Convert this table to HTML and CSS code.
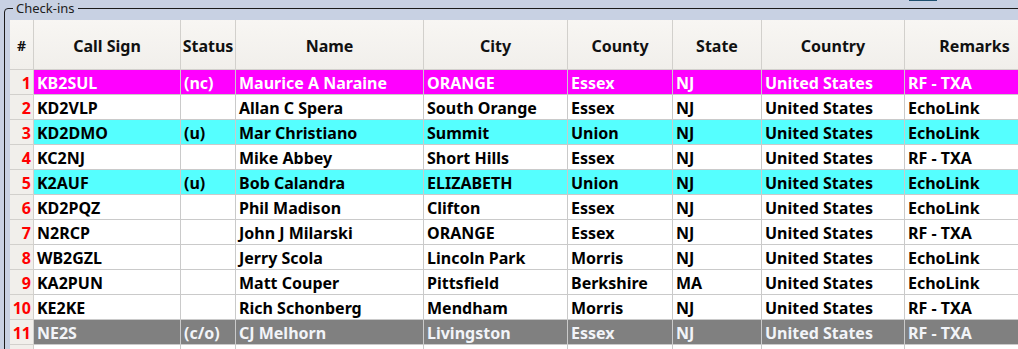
FILE: index.html
```html
<!DOCTYPE html>
<html>
<head>
<meta charset="utf-8">
<link rel="stylesheet" href="styles.css">
</head>
<body>
<div class="tab-button"></div>
<fieldset class="group">
  <legend class="group-label">Check-ins</legend>
  <div class="grid">
    <div class="hd num">#</div>
    <div class="hd">Call Sign</div>
    <div class="hd">Status</div>
    <div class="hd">Name</div>
    <div class="hd">City</div>
    <div class="hd">County</div>
    <div class="hd">State</div>
    <div class="hd">Country</div>
    <div class="hd">Remarks</div>

    <div class="rn">1</div>
    <div class="c nc">KB2SUL</div><div class="c nc">(nc)</div><div class="c nc">Maurice A Naraine</div><div class="c nc">ORANGE</div><div class="c nc">Essex</div><div class="c nc">NJ</div><div class="c nc">United States</div><div class="c nc">RF - TXA</div>

    <div class="rn">2</div>
    <div class="c">KD2VLP</div><div class="c"></div><div class="c">Allan C Spera</div><div class="c">South Orange</div><div class="c">Essex</div><div class="c">NJ</div><div class="c">United States</div><div class="c">EchoLink</div>

    <div class="rn">3</div>
    <div class="c u">KD2DMO</div><div class="c u">(u)</div><div class="c u">Mar Christiano</div><div class="c u">Summit</div><div class="c u">Union</div><div class="c u">NJ</div><div class="c u">United States</div><div class="c u">EchoLink</div>

    <div class="rn">4</div>
    <div class="c">KC2NJ</div><div class="c"></div><div class="c">Mike Abbey</div><div class="c">Short Hills</div><div class="c">Essex</div><div class="c">NJ</div><div class="c">United States</div><div class="c">RF - TXA</div>

    <div class="rn">5</div>
    <div class="c u">K2AUF</div><div class="c u">(u)</div><div class="c u">Bob Calandra</div><div class="c u">ELIZABETH</div><div class="c u">Union</div><div class="c u">NJ</div><div class="c u">United States</div><div class="c u">EchoLink</div>

    <div class="rn">6</div>
    <div class="c">KD2PQZ</div><div class="c"></div><div class="c">Phil Madison</div><div class="c">Clifton</div><div class="c">Essex</div><div class="c">NJ</div><div class="c">United States</div><div class="c">EchoLink</div>

    <div class="rn">7</div>
    <div class="c">N2RCP</div><div class="c"></div><div class="c">John J Milarski</div><div class="c">ORANGE</div><div class="c">Essex</div><div class="c">NJ</div><div class="c">United States</div><div class="c">RF - TXA</div>

    <div class="rn">8</div>
    <div class="c">WB2GZL</div><div class="c"></div><div class="c">Jerry Scola</div><div class="c">Lincoln Park</div><div class="c">Morris</div><div class="c">NJ</div><div class="c">United States</div><div class="c">EchoLink</div>

    <div class="rn">9</div>
    <div class="c">KA2PUN</div><div class="c"></div><div class="c">Matt Couper</div><div class="c">Pittsfield</div><div class="c">Berkshire</div><div class="c">MA</div><div class="c">United States</div><div class="c">EchoLink</div>

    <div class="rn">10</div>
    <div class="c">KE2KE</div><div class="c"></div><div class="c">Rich Schonberg</div><div class="c">Mendham</div><div class="c">Morris</div><div class="c">NJ</div><div class="c">United States</div><div class="c">RF - TXA</div>

    <div class="rn">11</div>
    <div class="c co">NE2S</div><div class="c co">(c/o)</div><div class="c co">CJ Melhorn</div><div class="c co">Livingston</div><div class="c co">Essex</div><div class="c co">NJ</div><div class="c co">United States</div><div class="c co">RF - TXA</div>

    <div class="rn"></div>
    <div class="c"></div><div class="c"></div><div class="c"></div><div class="c"></div><div class="c"></div><div class="c"></div><div class="c"></div><div class="c"></div>
  </div>
</fieldset>
</body>
</html>
```
FILE: styles.css
```css
html, body {
  margin: 0;
  padding: 0;
  width: 1018px;
  height: 349px;
  overflow: hidden;
  background: #c8d1e3;
  font-family: "Noto Sans", "DejaVu Sans", sans-serif;
}

.tab-button {
  position: absolute;
  left: 909px;
  top: -4px;
  width: 28px;
  height: 5px;
  background: #2f80b2;
  border: 1px solid #1d4f6e;
  box-sizing: border-box;
}

.group {
  margin: 0 0 0 4px;
  padding: 4px 0 0 5px;
  width: 1200px;
  height: 400px;
  border: 1px solid #1b1b1b;
  border-top-left-radius: 4px;
  box-sizing: border-box;
}

.group-label {
  margin-left: 3px;
  padding: 0 3px;
  font-size: 13px;
  line-height: 16px;
  color: #202020;
}

.grid {
  display: grid;
  grid-template-columns: 24px 147px 55px 188px 144px 105px 89px 143px 140px;
  grid-template-rows: 50px repeat(12, 25px);
  background: #ffffff;
  font-size: 16px;
  font-weight: bold;
}

.grid > div {
  box-sizing: border-box;
  border-right: 1px solid #cacaca;
  border-bottom: 1px solid #cacaca;
  white-space: nowrap;
  overflow: hidden;
}

.hd {
  background: linear-gradient(#f8f6f3, #f1efeb);
  display: flex;
  align-items: center;
  justify-content: center;
  padding-top: 2px;
  color: #111;
  border-color: #d2d0cc !important;
}

.hd.num {
  font-size: 14px;
}

.rn {
  background: #f1efeb;
  color: #ff0000;
  text-align: right;
  padding-right: 2px;
  line-height: 26px;
  border-color: #d2d0cc !important;
}

.c {
  padding-left: 3px;
  line-height: 26px;
  color: #000;
}

.nc {
  background: #ff00ff;
  color: #ffffff;
}

.u {
  background: #55ffff;
}

.co {
  background: #808080;
  color: #f2f4f8;
}
```
